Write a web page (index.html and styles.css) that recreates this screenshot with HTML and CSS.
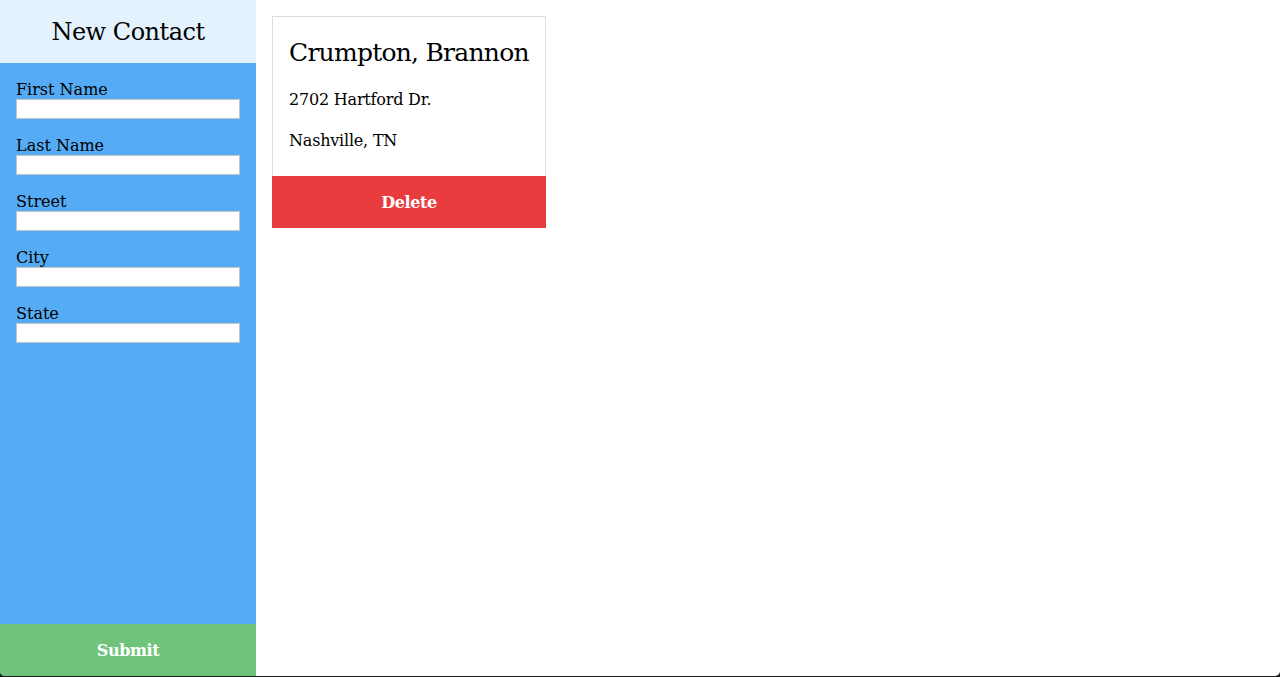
FILE: index.html
```html
<!DOCTYPE html>
<html>
<head>
<meta charset="utf-8">
<title>Contacts</title>
<link rel="stylesheet" href="styles.css">
</head>
<body>
<div class="window">
  <aside class="sidebar">
    <h1 class="sidebar-title">New Contact</h1>
    <form class="contact-form">
      <div class="fields">
        <label class="field"><span class="field-label">First Name</span><input class="field-input" type="text"></label>
        <label class="field"><span class="field-label">Last Name</span><input class="field-input" type="text"></label>
        <label class="field"><span class="field-label">Street</span><input class="field-input" type="text"></label>
        <label class="field"><span class="field-label">City</span><input class="field-input" type="text"></label>
        <label class="field"><span class="field-label">State</span><input class="field-input" type="text"></label>
      </div>
      <button class="submit-btn" type="button">Submit</button>
    </form>
  </aside>
  <main class="content">
    <div class="card">
      <div class="card-body">
        <h2 class="card-title">Crumpton, Brannon</h2>
        <p class="card-line">2702 Hartford Dr.</p>
        <p class="card-line">Nashville, TN</p>
      </div>
      <button class="delete-btn" type="button">Delete</button>
    </div>
  </main>
</div>
</body>
</html>
```
FILE: styles.css
```css
html, body {
  margin: 0;
  padding: 0;
  height: 677px;
  background: #1c1c1c;
  overflow: hidden;
}
body {
  font-family: "DejaVu Serif", "Liberation Serif", serif;
  color: #000;
}
.window {
  display: flex;
  height: 676px;
  background: #fff;
  border-radius: 0 0 5px 5px;
  overflow: hidden;
}
.sidebar {
  width: 256px;
  flex: none;
  display: flex;
  flex-direction: column;
  background: #55acf4;
}
.sidebar-title {
  box-sizing: border-box;
  margin: 0;
  height: 63px;
  padding-top: 1px;
  background: #e3f2fd;
  font-size: 24px;
  font-weight: normal;
  line-height: 62px;
  text-align: center;
  letter-spacing: -0.5px;
}
.contact-form {
  flex: 1;
  display: flex;
  flex-direction: column;
}
.fields {
  flex: 1;
  padding: 16px 16px 0 16px;
  display: flex;
  flex-direction: column;
  gap: 16px;
}
.field {
  display: flex;
  flex-direction: column;
}
.field-label {
  box-sizing: border-box;
  font-size: 16px;
  line-height: 19px;
  height: 20px;
  padding-top: 1px;
}
.field-input {
  box-sizing: border-box;
  width: 224px;
  height: 20px;
  margin: 0;
  border: 1px solid #c4c4c4;
  background: #fff;
  padding: 0 2px;
}
.submit-btn {
  height: 52px;
  border: none;
  margin: 0;
  background: #70c47a;
  color: #fff;
  font-family: inherit;
  font-size: 16px;
  font-weight: bold;
  letter-spacing: -0.4px;
}
.content {
  flex: 1;
  padding: 16px;
  display: flex;
  align-items: flex-start;
}
.card {
  width: 274px;
  display: flex;
  flex-direction: column;
}
.card-body {
  box-sizing: border-box;
  border: 1px solid #dddddd;
  border-bottom: none;
  padding: 20px 16px 0 16px;
  height: 160px;
}
.card-title {
  margin: 0;
  font-size: 25px;
  font-weight: normal;
  line-height: 32px;
  letter-spacing: -0.75px;
  white-space: nowrap;
}
.card-line {
  margin: 21px 0 0 0;
  font-size: 16px;
  line-height: 20px;
  letter-spacing: -0.2px;
}
.delete-btn {
  height: 52px;
  border: none;
  margin: 0;
  background: #e83c3f;
  color: #fff;
  font-family: inherit;
  font-size: 16px;
  font-weight: bold;
  letter-spacing: -0.4px;
}
```
